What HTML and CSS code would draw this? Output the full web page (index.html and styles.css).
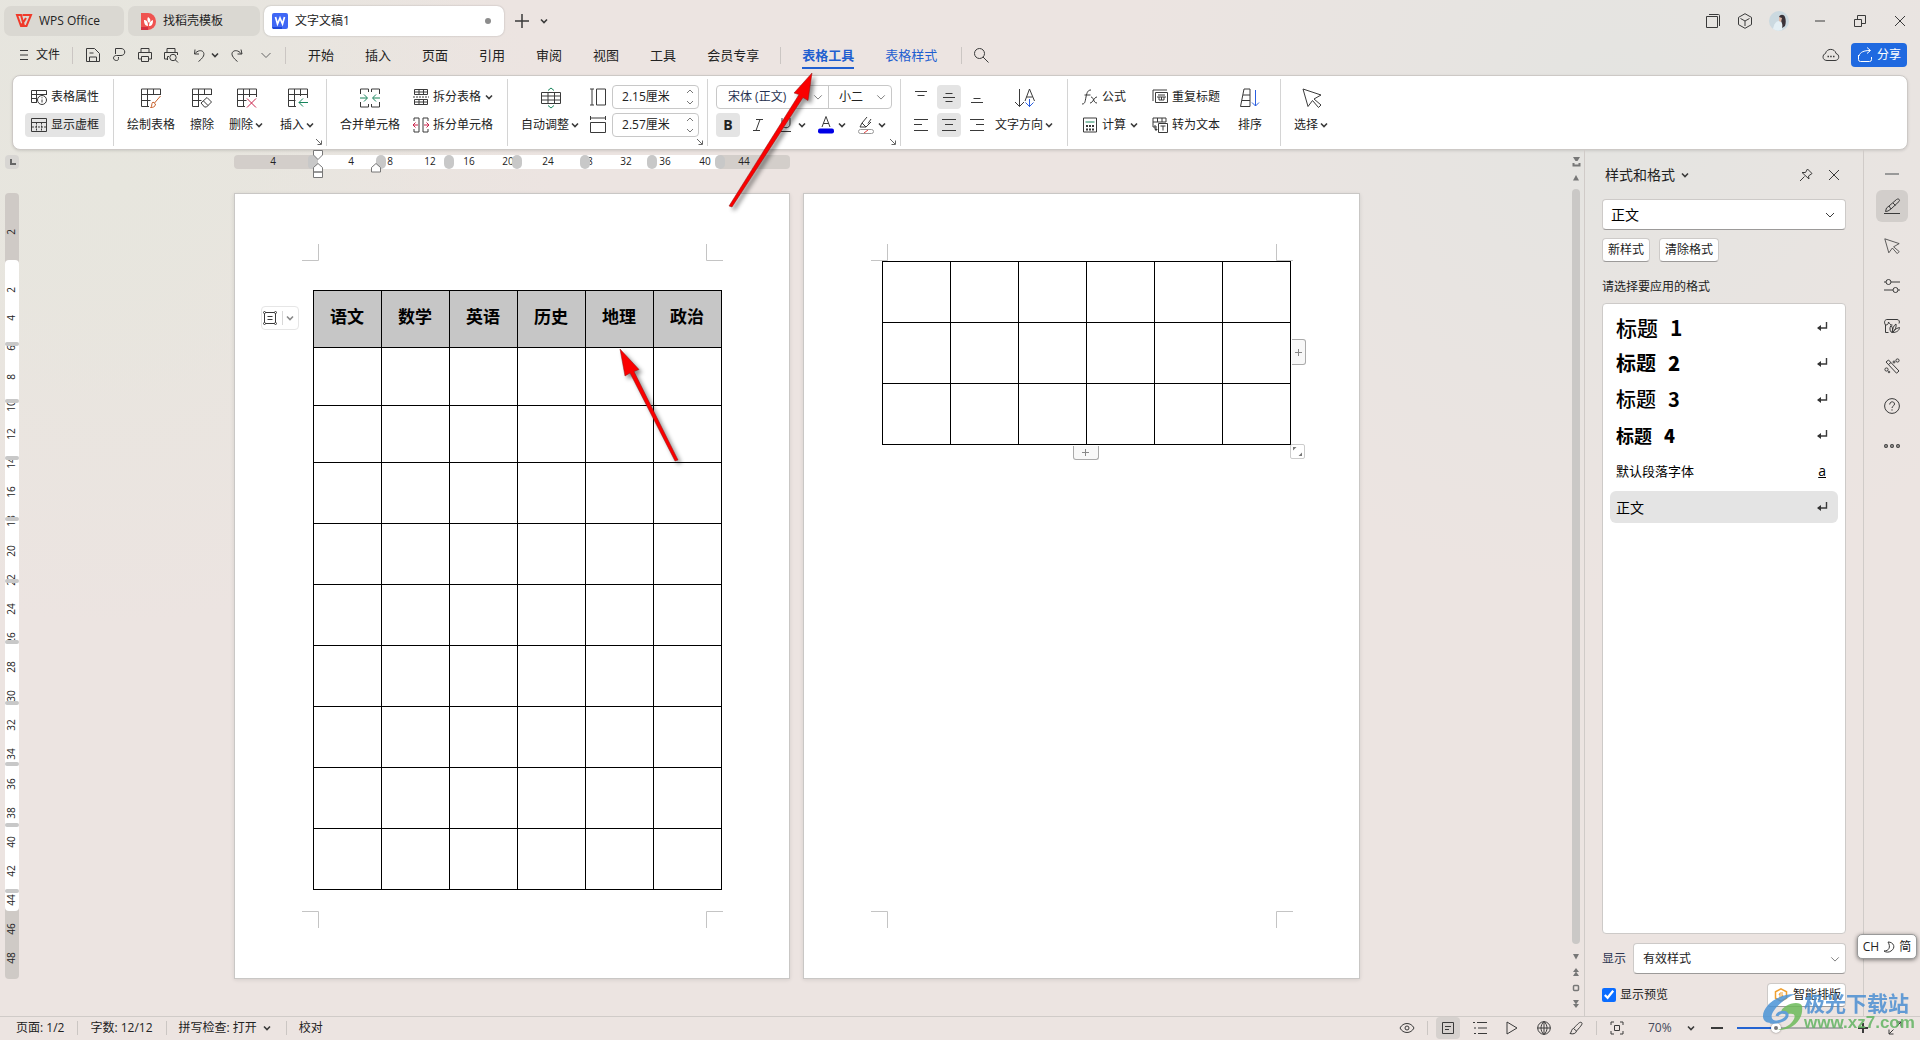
FILE: index.html
```html
<!DOCTYPE html>
<html lang="zh-CN">
<head>
<meta charset="utf-8">
<title>文字文稿1 - WPS Office</title>
<link rel="stylesheet" href="styles.css">
</head>
<body>
<svg class="defs" aria-hidden="true">
  <symbol id="chev" viewBox="0 0 12 12"><path d="M3 4.500l3 3 3-3" stroke-width="1.600"/></symbol>
  <symbol id="chev-l" viewBox="0 0 12 12"><path d="M1.500 4l4.500 4.500L10.500 4" stroke="#666"/></symbol>
  <symbol id="launch" viewBox="0 0 8 8"><path d="M1 1l5 5M6.500 2.500v4h-4" stroke="#666"/></symbol>
  <symbol id="enter" viewBox="0 0 12 12"><path d="M10.500 1v6H2" stroke-width="1.400"/><path d="M5 4v6L1 7z" fill="#333" stroke="none"/></symbol>
  <symbol id="cursor" viewBox="0 0 20 20"><path d="M1 1l18 6-7 4 7 6-2.500 2.500-6-7-4.500 6z"/></symbol>
</svg>

<header class="titlebar">
  <button class="tab tab-home"><svg width="16" height="14" viewBox="0 0 16 14"><path d="M1 1h4l3 11h-3zM5 12L10 4M8 12h2.500L15 1H6.500" fill="none" stroke="#f03a2a" stroke-width="2"/></svg>WPS Office</button>
  <button class="tab tab-docer"><svg class="flat" width="15" height="17" viewBox="0 0 15 17"><path d="M0 0h7a8 8.500 0 010 17H0z" fill="#ef5350"/><path d="M0 14h7v3H0z" fill="#d32f3f"/><path d="M3 7c3 0 4 2 4 6-3 0-4-3-4-6zM7 4c3 2 3 4 1 6-2-2-2-4-1-6zM8 13c0-3 1-5 4-6 0 4-1 6-4 6z" fill="#fff"/></svg>找稻壳模板</button>
  <button class="tab tab-active"><svg class="flat" width="16" height="16" viewBox="0 0 16 16"><rect width="16" height="16" rx="2" fill="#3f67f5"/><path d="M0 14h10v2H1z" fill="#1d46d8"/><path d="M3.500 4l2 7L8 5l2.500 6 2-7" fill="none" stroke="#fff" stroke-width="1.700"/></svg><span>文字文稿1</span><i class="dot"></i></button>
  <button class="ic w32" aria-label="新建"><svg width="16" height="16"><path d="M8 1v14M1 8h14" stroke-width="1.500"/></svg></button>
  <button class="ic" aria-label="标签列表"><svg width="12" height="12"><use href="#chev"/></svg></button>
  <span class="grow"></span>
  <button class="ic w32" aria-label="窗口"><svg width="16" height="16"><path d="M1.500 3.500h11v11h-11zM4 1.500h9.500a1 1 0 011 1V13"/></svg></button>
  <button class="ic w32" aria-label="应用"><svg width="16" height="16"><path d="M8 .700l6.500 3.700v7.200L8 15.300l-6.500-3.700V4.400zM3.500 5.500L8 8l4.500-2.500M8 8v5"/></svg></button>
  <button class="ic w36" aria-label="账号"><svg class="flat" width="20" height="20"><circle cx="10" cy="10" r="10" fill="#cbd9e0"/><path d="M4 18c1-5 3-8 6-8s4 4 3 9q-5 2-9-1z" fill="#e4eff4"/><path d="M10 6c1-3 5-3 6 0 1 3 1 6 0 9l-3 2c1-3 0-5-1-7z" fill="#3a3238"/><path d="M10 6l3 1-1 4-2-1z" fill="#e0b9a8"/></svg></button>
  <span class="gap3"></span>
  <button class="ic w40" aria-label="最小化"><svg width="12" height="12"><path d="M1 6h10"/></svg></button>
  <button class="ic w40" aria-label="还原"><svg width="12" height="12"><path d="M.500 4.500h7v7h-7zM3.500 4V.500h8v8H8"/></svg></button>
  <button class="ic w40" aria-label="关闭"><svg width="12" height="12"><path d="M1 1l10 10M11 1L1 11"/></svg></button>
</header>

<div class="menubar">
  <button class="file"><svg width="10" height="12"><path d="M1 1.500h8M1 6h8M1 10.500h8"/></svg>文件</button>
  <i class="sep"></i>
  <button class="ic w26" aria-label="保存"><svg width="16" height="16"><path d="M1.500 1.500h8l5 5v8h-13zM4.500 14v-4h7v4M4.500 6h4"/></svg></button>
  <button class="ic w26" aria-label="导出PDF"><svg width="14" height="16"><path d="M3.500 7V1.500H9c5 0 5 7 0 7H4.500c-4 0-4 5 0 5 2 0 2-1 2-3.500"/></svg></button>
  <button class="ic w26" aria-label="打印"><svg width="16" height="16"><path d="M4 5V1.500h8V5M4 12H1.500V5.500h13V12H12M4.500 9.500h7v5h-7z"/></svg></button>
  <button class="ic w26" aria-label="打印预览"><svg width="16" height="16"><path d="M4 5V1.500h8V5M4 12H1.500V5.500h13V8M4.500 13V9.500H6"/><circle cx="10" cy="10.500" r="3.200"/><path d="M12.500 13l2.500 2.500"/></svg></button>
  <button class="ic undo" aria-label="撤销"><svg width="20" height="16"><path d="M6 2.500L5.500 7h4.500M5.500 7c5-6 11-3 9 2-1 2-3 4-5 5.500"/></svg><svg width="12" height="12"><use href="#chev"/></svg></button>
  <button class="ic w32" aria-label="恢复"><svg width="16" height="16"><path d="M12 2.500l1 4.500H8.500M12.500 7C8 1 1 4 3.500 9c1 2 3 4 5 5.500"/></svg></button>
  <button class="ic w26" aria-label="更多"><svg width="12" height="12"><use href="#chev-l"/></svg></button>
  <i class="sep sep-nav"></i>
  <nav class="nav">
    <a href="#">开始</a><a href="#">插入</a><a href="#">页面</a><a href="#">引用</a><a href="#">审阅</a><a href="#">视图</a><a href="#">工具</a><a href="#">会员专享</a>
  </nav>
  <i class="sep sep-wide"></i>
  <nav class="nav nav-ctx"><a href="#" class="current">表格工具</a><a href="#">表格样式</a></nav>
  <i class="sep sep-search"></i>
  <button class="ic w32" aria-label="搜索"><svg width="16" height="16"><circle cx="6.500" cy="6.500" r="5"/><path d="M10 10l5.500 5.500"/></svg></button>
  <span class="grow"></span>
  <button class="ic cloud" aria-label="云同步"><svg width="18" height="14"><path d="M5 12.500c-5 0-5-6-1.500-7C4.500 0 13 0 14 5.500c4 1 3.500 7-1 7z"/><path d="M5.500 8.500h1.500M8.200 8.500h1.500M11 8.500h1.500" stroke-width="1.600"/></svg></button>
  <button class="share"><svg width="16" height="16"><path d="M1.500 8v4.500a2 2 0 002 2h9a2 2 0 002-2V10M2 9c1-4 5-5.500 11-5.500M10 .500l3.500 3-3.500 3"/></svg>分享</button>
</div>

<section class="ribbon">
  <div class="group g1">
    <div class="stack">
      <button class="sb"><svg width="16" height="16"><path d="M6 13.500H.500v-12h15V6M.500 5.500h15M5.500 1.500v12M.500 9.500h5"/><circle cx="11" cy="11" r="4.500"/><path d="M11 10.500v3M11 8.300v1"/></svg>表格属性</button>
      <button class="sb on"><svg width="16" height="16"><path d="M.500 1.500h15v13H.500zM.500 5.500h15"/><path d="M5.500 5.500v9M10.500 5.500v9M1 10h14" stroke-dasharray="2 1"/></svg>显示虚框</button>
    </div>
  </div>
  <div class="group g2">
    <div class="bigs">
      <button class="bb"><svg width="20" height="20"><path d="M8 18.500H.500V1h19v6M.500 6.500h19M6.500 1v17.500M.500 12.500h9M12.500 1v5.500"/><path d="M19.500 8l-6 7M12 14l2.500 2c0 3-3 3.500-5 3.500 2-1 .500-4 2.500-5.500z" stroke="#c8602a"/></svg><span>绘制表格</span></button>
      <button class="bb"><svg width="20" height="20"><path d="M7 18.500H.500V1h19v6M.500 6.500h19M6.500 1v17.500M.500 12.500h9M12.500 1v5.500M9 15l6-5.500 4.500 4.500-5 5h-2zM11.500 13l4.500 4.500"/></svg><span>擦除</span></button>
      <button class="bb"><svg width="20" height="20"><path d="M8 18.500H.500V1h19v8M.500 6.500h19M6.500 1v17.500M.500 12.500h9M12.500 1v8"/><path d="M10 10.500l9 9M19 10.500l-9 9" stroke="#c9234a"/></svg><span>删除<svg width="12" height="12"><use href="#chev"/></svg></span></button>
      <button class="bb"><svg width="20" height="20"><path d="M8 18.500H.500V1h19v9M.500 6.500h19M6.500 1v17.500M.500 12.500h7M12.500 1v7"/><path d="M20 14.500h-9M15 10.500l-4 4 4 4" stroke="#16845b"/></svg><span>插入<svg width="12" height="12"><use href="#chev"/></svg></span></button>
    </div>
    <svg class="launch" width="8" height="8"><use href="#launch"/></svg>
  </div>
  <div class="group g3">
    <div class="bigs">
      <button class="bb"><svg width="20" height="20"><path d="M.500 6V1h8v3M.500 14v5h8v-3M19.500 6V1h-8v3M19.500 14v5h-8v-3"/><path d="M0 10h7M4 6.500L7.500 10 4 13.500M20 10h-7M16 6.500L12.500 10l3.500 3.500" stroke="#16845b"/></svg><span>合并单元格</span></button>
    </div>
    <div class="stack">
      <button class="sb"><svg width="16" height="16"><path d="M1.500 5.500v-5h13v5M1.500 3h13M6 .500v5M10.500 .500v5M1.500 10.500v5h13v-5zM1.500 13h13M6 10.500v5M10.500 10.500v5M1.500 5.500h13"/><path d="M0 8h16" stroke-dasharray="2 1"/></svg>拆分表格<svg class="near" width="12" height="12"><use href="#chev"/></svg></button>
      <button class="sb"><svg width="16" height="16"><path d="M1 4V1h5v14H1v-3M15 4V1h-5v14h5v-3"/><path d="M0 8h5M2.500 5.500L0 8l2.500 2.500M16 8h-5M13.500 5.500L16 8l-2.500 2.500" stroke="#c9234a"/></svg>拆分单元格</button>
    </div>
  </div>
  <div class="group g4">
    <div class="bigs">
      <button class="bb"><svg width="20" height="20"><path d="M.500 4.500h19v11H.500zM.500 8h19M.500 12h19M7 4.500v11M13.500 4.500v11"/><path d="M7 2.500l3-2.500 3 2.500M7 17.500l3 2.500 3-2.500" stroke="#16845b"/></svg><span>自动调整<svg width="12" height="12"><use href="#chev"/></svg></span></button>
    </div>
    <div class="stack">
      <label class="num"><svg width="16" height="18"><path d="M0 1h4M2 1v16M0 17h4M6.500 1h9v16h-9z"/></svg><span class="field"><input type="text" value="2.15厘米" aria-label="行高"><svg width="10" height="20"><path d="M2 6l3-3 3 3M2 14l3 3 3-3" stroke="#777"/></svg></span></label>
      <label class="num"><svg width="16" height="18"><path d="M.500 0v4M.500 2h15M15.500 0v4M.500 6.500h15v10H.500z"/></svg><span class="field"><input type="text" value="2.57厘米" aria-label="列宽"><svg width="10" height="20"><path d="M2 6l3-3 3 3M2 14l3 3 3-3" stroke="#777"/></svg></span></label>
    </div>
    <svg class="launch" width="8" height="8"><use href="#launch"/></svg>
  </div>
  <div class="group g5">
    <div class="stack">
      <div class="fonts">
        <span class="sel sel-font"><select aria-label="字体"><option>宋体 (正文)</option></select><svg width="10" height="12"><use href="#chev-l"/></svg></span>
        <span class="sel sel-size"><select aria-label="字号"><option>小二</option></select><svg width="10" height="12"><use href="#chev-l"/></svg></span>
      </div>
      <div class="fmt">
        <button class="sq on bold">B</button>
        <button class="sq it" aria-label="斜体"><svg width="12" height="14"><path d="M4 1.500h7M1 12.500h7M8 1.500L4 12.500"/></svg></button>
        <button class="split" aria-label="下划线"><svg width="20" height="16"><path d="M6 1v6c0 5 8 5 8 0V1M5 14.500h10"/></svg><svg width="12" height="12"><use href="#chev"/></svg></button>
        <button class="split" aria-label="字体颜色"><svg width="20" height="20"><path d="M6 12l4-10.500L14 12M7.200 8.500h5.600"/><rect x="2" y="13.500" width="16" height="5" rx="2" fill="#0000e6" stroke="none"/></svg><svg width="12" height="12"><use href="#chev"/></svg></button>
        <button class="split" aria-label="突出显示"><svg width="20" height="20"><path d="M4 12l2-4 5-6M6 8l4 4 5-5M10 12H4M12 8.500L15 4"/><rect x="2.500" y="14.500" width="15" height="4" rx="2" stroke="#999"/><path d="M8 18l4-3" stroke="#e04040"/></svg><svg width="12" height="12"><use href="#chev"/></svg></button>
      </div>
    </div>
    <svg class="launch" width="8" height="8"><use href="#launch"/></svg>
  </div>
  <div class="group g6">
    <div class="aligns">
      <button class="sq" aria-label="顶端对齐"><svg width="14" height="14"><path d="M1 1.500h12M3.500 5.500h7"/></svg></button>
      <button class="sq on" aria-label="垂直居中"><svg width="14" height="14"><path d="M3.500 3.500h7M1 7.500h12M3.500 11.500h7"/></svg></button>
      <button class="sq" aria-label="底端对齐"><svg width="14" height="14"><path d="M3.500 8.500h7M1 12.500h12"/></svg></button>
      <button class="sq" aria-label="左对齐"><svg width="14" height="14"><path d="M0 1.500h14M0 6.500h8M0 12.500h14"/></svg></button>
      <button class="sq on" aria-label="水平居中"><svg width="14" height="14"><path d="M0 1.500h14M3 6.500h8M0 12.500h14"/></svg></button>
      <button class="sq" aria-label="右对齐"><svg width="14" height="14"><path d="M0 1.500h14M6 6.500h8M0 12.500h14"/></svg></button>
    </div>
    <div class="bigs">
      <button class="bb"><svg width="20" height="20"><path d="M4.500 1v17.500M0 14l4.500 4.500L9 14M10 13l4.500-12L19.500 13M11.500 9h6"/><path d="M14.500 11v8M10.500 14.500l4 4 4-4" stroke="#2b5fe0"/></svg><span>文字方向<svg width="12" height="12"><use href="#chev"/></svg></span></button>
    </div>
  </div>
  <div class="group g7">
    <div class="stack">
      <button class="sb"><svg width="16" height="16"><path d="M0 15c3 0 3-2 4-7S6 1 9 1M2.500 6h6M9 8c3 0 2 6 6 6M15 8c-3 0-4 6-7 6"/></svg>公式</button>
      <button class="sb"><svg width="16" height="16"><path d="M1.500 1h13v14h-13z"/><path d="M3.500 5h9" stroke="#16845b"/><path d="M4 9h8M4 12.500h8" stroke-width="2" stroke-dasharray="2 1"/></svg>计算<svg class="near" width="12" height="12"><use href="#chev"/></svg></button>
    </div>
    <div class="stack">
      <button class="sb"><svg width="16" height="16"><path d="M1 12V1h14M3.500 3.500h12v10h-12zM5 8h9M6 6h7M7 8v3h5V8M9.500 8v3"/></svg>重复标题</button>
      <button class="sb"><svg width="16" height="16"><path d="M1 6V1h13v4H1M5.500 1v4M10 1v4M1 6v4h4M3 8v4.500h2M3.500 11L5 12.500 3.500 14M6.500 6.500h9v9h-9zM8.500 9h5M11 9v4.500"/></svg>转为文本</button>
    </div>
    <div class="bigs">
      <button class="bb"><svg width="20" height="20"><path d="M4 1h6v17.500H.500zM3 7h7M2 12.500h8"/><path d="M15.500 2v16M12 14.500l3.500 3.500 3.500-3.500" stroke="#2b5fe0"/></svg><span>排序</span></button>
    </div>
  </div>
  <div class="group g8">
    <div class="bigs">
      <button class="bb"><svg width="20" height="20"><use href="#cursor"/></svg><span>选择<svg width="12" height="12"><use href="#chev"/></svg></span></button>
    </div>
  </div>
</section>

<main class="work">
  <div class="vruler">
    <svg width="14" height="14"><rect width="14" height="14" rx="4" fill="#d8d6d3" stroke="none"/><path d="M6 4v5h5" stroke="#666" stroke-width="2"/></svg>
    <svg width="14" height="786">
      <rect width="14" height="786" rx="4" fill="#cfcac6" stroke="none"/><rect y="67" width="14" height="651" rx="4" fill="#fff" stroke="none"/>
      <g class="rnum">
        <text transform="translate(10 39) rotate(-90)">2</text><text transform="translate(10 97) rotate(-90)">2</text><text transform="translate(10 125) rotate(-90)">4</text><text transform="translate(10 155) rotate(-90)">6</text><text transform="translate(10 184) rotate(-90)">8</text><text transform="translate(10 213) rotate(-90)">10</text><text transform="translate(10 241) rotate(-90)">12</text><text transform="translate(10 270) rotate(-90)">14</text><text transform="translate(10 299) rotate(-90)">16</text><text transform="translate(10 328) rotate(-90)">18</text><text transform="translate(10 358) rotate(-90)">20</text><text transform="translate(10 387) rotate(-90)">22</text><text transform="translate(10 416) rotate(-90)">24</text><text transform="translate(10 445) rotate(-90)">26</text><text transform="translate(10 474) rotate(-90)">28</text><text transform="translate(10 503) rotate(-90)">30</text><text transform="translate(10 532) rotate(-90)">32</text><text transform="translate(10 561) rotate(-90)">34</text><text transform="translate(10 591) rotate(-90)">36</text><text transform="translate(10 620) rotate(-90)">38</text><text transform="translate(10 649) rotate(-90)">40</text><text transform="translate(10 678) rotate(-90)">42</text><text transform="translate(10 707) rotate(-90)">44</text><text transform="translate(10 736) rotate(-90)">46</text><text transform="translate(10 765) rotate(-90)">48</text>
      </g>
      <g fill="#c8c8c8" stroke="none"><rect y="149" width="14" height="4" rx="2"/><rect y="206" width="14" height="4" rx="2"/><rect y="263" width="14" height="4" rx="2"/><rect y="324" width="14" height="4" rx="2"/><rect y="386" width="14" height="4" rx="2"/><rect y="447" width="14" height="4" rx="2"/><rect y="508" width="14" height="4" rx="2"/><rect y="569" width="14" height="4" rx="2"/><rect y="630" width="14" height="4" rx="2"/><rect y="696" width="14" height="4" rx="2"/></g>
    </svg>
  </div>

  <div class="canvas">
    <svg class="hruler" width="556" height="14">
      <rect width="556" height="14" rx="4" fill="#d3ceca" stroke="none"/><rect x="84" width="402" height="14" fill="#fff" stroke="none"/>
      <g class="rnum"><text x="39" y="10">4</text><text x="117" y="10">4</text><text x="156" y="10">8</text><text x="196" y="10">12</text><text x="235" y="10">16</text><text x="274" y="10">20</text><text x="314" y="10">24</text><text x="353" y="10">28</text><text x="392" y="10">32</text><text x="431" y="10">36</text><text x="471" y="10">40</text><text x="510" y="10">44</text></g>
      <g fill="#c8c8c8" stroke="none"><rect x="74" width="10" height="14" rx="4"/><rect x="142" width="10" height="14" rx="5"/><rect x="210" width="10" height="14" rx="5"/><rect x="278" width="10" height="14" rx="5"/><rect x="346" width="10" height="14" rx="5"/><rect x="413" width="10" height="14" rx="5"/><rect x="481" width="10" height="14" rx="5"/></g>
      <g fill="#fff" stroke="#777"><path d="M79.500-4.500h9V0L84 4.500 79.500 0zM84 8.500l4.500 4v4.500h-9v-4.500zM79.500 17h9v5.500h-9zM142 8.500l4.500 4v4.500h-9v-4.500z"/></g>
    </svg>
    <article class="page page1">
      <svg class="mark tl" width="17" height="17"><path d="M16.500 0v16.500H0"/></svg>
      <svg class="mark tr" width="17" height="17"><path d="M.500 0v16.500H17"/></svg>
      <svg class="mark bl" width="17" height="17"><path d="M0 .500h16.500V17"/></svg>
      <svg class="mark br" width="17" height="17"><path d="M17 .500H.500V17"/></svg>
      <button class="tbltool" aria-label="表格选项"><svg width="14" height="14"><path d="M1.500 1.500h11v11h-11zM4.500 5.500h5M4.500 8.500h5"/><g fill="#fff"><circle cx="1.500" cy="1.500" r="1"/><circle cx="12.500" cy="1.500" r="1"/><circle cx="1.500" cy="12.500" r="1"/><circle cx="12.500" cy="12.500" r="1"/></g></svg><i></i><svg class="soft" width="12" height="12"><use href="#chev"/></svg></button>
      <table class="doc">
        <thead><tr class="r57"><th>语文</th><th>数学</th><th>英语</th><th>历史</th><th>地理</th><th>政治</th></tr></thead>
        <tbody>
        <tr class="r58"><td></td><td></td><td></td><td></td><td></td><td></td></tr>
        <tr class="r57"><td></td><td></td><td></td><td></td><td></td><td></td></tr>
        <tr><td></td><td></td><td></td><td></td><td></td><td></td></tr>
        <tr><td></td><td></td><td></td><td></td><td></td><td></td></tr>
        <tr><td></td><td></td><td></td><td></td><td></td><td></td></tr>
        <tr><td></td><td></td><td></td><td></td><td></td><td></td></tr>
        <tr><td></td><td></td><td></td><td></td><td></td><td></td></tr>
        <tr><td></td><td></td><td></td><td></td><td></td><td></td></tr>
        <tr><td></td><td></td><td></td><td></td><td></td><td></td></tr>
        </tbody>
      </table>
      <svg class="arrow arrow-cell" width="70" height="125"><path d="M5 3l5 27 5-3 45 88 3-1L19 25.500l5-2z"/></svg>
      <svg class="arrow arrow-tab" width="100" height="145"><path d="M89 3L71 23l5 1.500L6 136l3 1L80 27.500l5 3z"/></svg>
    </article>
    <article class="page page2">
      <svg class="mark tl" width="17" height="17"><path d="M16.500 0v16.500H0"/></svg>
      <svg class="mark tr" width="17" height="17"><path d="M.500 0v16.500H17"/></svg>
      <svg class="mark bl" width="17" height="17"><path d="M0 .500h16.500V17"/></svg>
      <svg class="mark br" width="17" height="17"><path d="M17 .500H.500V17"/></svg>
      <table class="doc">
        <tbody>
        <tr><td></td><td></td><td></td><td></td><td></td><td></td></tr>
        <tr><td></td><td></td><td></td><td></td><td></td><td></td></tr>
        <tr><td></td><td></td><td></td><td></td><td></td><td></td></tr>
        </tbody>
      </table>
      <button class="handle addcol" aria-label="添加列"><svg width="7" height="7"><path d="M3.500 0v7M0 3.500h7"/></svg></button>
      <button class="handle addrow" aria-label="添加行"><svg width="7" height="7"><path d="M3.500 0v7M0 3.500h7"/></svg></button>
      <button class="handle grip" aria-label="调整大小"><svg class="tips" width="11" height="11"><path d="M1 1h3.500L1 4.500zM10 10H6.500L10 6.500z"/></svg></button>
    </article>
  </div>

  <div class="vscroll">
    <svg width="9" height="10"><path d="M1 0h7L5.500 4h-2zM.500 9.500V6h2v1.500h4V6h2v3.500z" fill="#777" stroke="none"/></svg>
    <svg width="8" height="6"><path d="M4 0l3 5.500H1z" fill="#777" stroke="none"/></svg>
    <i class="thumb"></i>
    <svg width="8" height="6"><path d="M4 5.500L7 0H1z" fill="#777" stroke="none"/></svg>
    <svg width="8" height="8"><path d="M4 0l3 4H1zM4 3.500L7 8H1z" fill="#777" stroke="none"/></svg>
    <svg width="8" height="8"><rect x="1.500" y="1.500" width="5" height="5" rx="1" stroke="#777" stroke-width="1.500"/></svg>
    <svg width="8" height="8"><path d="M4 4.500L7 0H1zM4 8l3-4H1z" fill="#777" stroke="none"/></svg>
  </div>

  <aside class="panel">
    <div class="phead"><span>样式和格式</span><svg width="12" height="12"><use href="#chev"/></svg><i class="grow"></i>
      <button class="ic pbtn" aria-label="固定"><svg width="14" height="14"><path d="M8.500 1L13 5.500 9.500 8l.500 3L3 4.500h3.500zM5.500 8.500L1 13"/></svg></button>
      <button class="ic pbtn" aria-label="关闭窗格"><svg width="12" height="12"><path d="M1 1l10 10M11 1L1 11"/></svg></button></div>
    <span class="sel psel"><select aria-label="当前样式"><option>正文</option></select><svg class="dark" width="12" height="12" viewBox="0 0 12 12"><path d="M2 4l4 4 4-4"/></svg></span>
    <div class="pbtns"><button class="pb">新样式</button><button class="pb">清除格式</button></div>
    <p class="plabel">请选择要应用的格式</p>
    <ul class="styles">
      <li class="h1"><span>标题<b>1</b></span><svg width="12" height="12"><use href="#enter"/></svg></li>
      <li class="h2"><span>标题<b>2</b></span><svg width="12" height="12"><use href="#enter"/></svg></li>
      <li class="h3"><span>标题<b>3</b></span><svg width="12" height="12"><use href="#enter"/></svg></li>
      <li class="h4"><span>标题<b>4</b></span><svg width="12" height="12"><use href="#enter"/></svg></li>
      <li class="def"><span>默认段落字体</span><u>a</u></li>
      <li class="body on"><span>正文</span><svg width="12" height="12"><use href="#enter"/></svg></li>
    </ul>
    <div class="show"><label for="show">显示</label><span class="sel ssel"><select id="show"><option>有效样式</option></select><svg width="10" height="12"><use href="#chev-l"/></svg></span></div>
    <div class="preview"><label><input type="checkbox" checked>显示预览</label>
      <button class="pb smart"><svg width="14" height="14"><path d="M7 .800l5.500 3v6.400L7 13.200l-5.500-3V3.800z" stroke="#f0a030" stroke-width="1.500"/><path d="M9 5H6l-1 2h4L8 9H5" stroke="#f0a030"/></svg>智能排版</button></div>
  </aside>

  <aside class="strip">
    <button class="fold" aria-label="折叠"><svg width="14" height="2"><path d="M0 1h14" stroke="#999" stroke-width="2"/></svg></button>
    <button class="on" aria-label="样式"><svg width="16" height="16"><path d="M12.500 1.500c2-1.500 4 .500 2.500 2L7 11l-3 2-2.500.500L2.500 10 5 8zM5 8l2 3M9 5l2.500 2.500M0 15.500h16"/></svg></button>
    <button aria-label="选择窗格"><svg width="16" height="16"><use href="#cursor"/></svg></button>
    <button aria-label="设置"><svg width="16" height="16"><circle cx="4.500" cy="4" r="2.500"/><path d="M0 4h2M7 4h9M0 12h9M14 12h2"/><circle cx="11.500" cy="12" r="2.500"/></svg></button>
    <button aria-label="图库"><svg width="16" height="16"><path d="M4.500 14.500H1.500V7C-.500 4 1 1.500 3 1.500h10c2 0 3 2 2 4M1.500 7c2 0 3-1 3-3 1 2 2 3 4 3M7.500 14.500c-2-2-2-5-.500-7 2 2 2 5 .500 7zM8.500 14.500c0-4 1-7 3.500-8.500.500 3-.500 6-3.500 8.500 1-2 3-4 7-5 0 3-3 5-7 5z"/></svg></button>
    <button aria-label="工具"><svg width="16" height="16"><path d="M2 4l2.500-2L15 13l-2.500 2.200zM4.500 6.500l2.500-2"/><circle cx="2.500" cy="11.500" r="1.600"/><circle cx="13.500" cy="2.500" r="1.600"/><circle cx="10" cy="4" r="1"/><circle cx="5" cy="14" r=".800"/></svg></button>
    <button aria-label="帮助"><svg width="16" height="16"><circle cx="8" cy="8" r="7.400"/><path d="M5.700 6.500C5.700 3 10.500 3 10.500 6c0 2-2.500 2-2.500 4M8 11.300v1.300"/></svg></button>
    <button aria-label="更多"><svg width="16" height="6"><g stroke-width="1.200"><circle cx="2" cy="3" r="1.400"/><circle cx="8" cy="3" r="1.400"/><circle cx="14" cy="3" r="1.400"/></g></svg></button>
  </aside>
</main>

<footer class="status">
  <span>页面: 1/2</span><i class="sep"></i><span>字数: 12/12</span><i class="sep"></i><span class="spell">拼写检查: 打开<svg width="12" height="12"><use href="#chev"/></svg></span><i class="sep"></i><span>校对</span>
  <div class="views">
    <button aria-label="护眼"><svg width="16" height="12"><path d="M1 6c3-6 11-6 14 0-3 6-11 6-14 0z"/><circle cx="8" cy="6" r="2"/></svg></button>
    <i class="sep"></i>
    <button class="on" aria-label="页面视图"><svg width="14" height="14"><path d="M1.500 1.500h11v11h-11zM4 5.500h6M4 8.500h4"/></svg></button>
    <button aria-label="大纲"><svg width="14" height="14"><path d="M4 1.500h10M5 7h9M5 12.500h9M0 1.500h2M1 7h2M1 12.500h2"/></svg></button>
    <button aria-label="阅读"><svg width="12" height="14"><path d="M1 1l10 6-10 6z"/></svg></button>
    <button aria-label="网页"><svg width="14" height="14"><circle cx="7" cy="7" r="6.300"/><path d="M.500 7h13M7 .500v13M7 .500C3 4 3 10 7 13.500M7 .500c4 3.500 4 9.500 0 13"/></svg></button>
    <button aria-label="写作"><svg width="14" height="14"><path d="M12.500 1.500c1.500 1 0 3-5 8.500L4.500 7.500C9 2.500 11 .500 12.500 1.500zM4.500 7.500C2 8 3 11 1 12.500c3 1 6 0 6.500-2.500"/></svg></button>
    <i class="sep"></i>
    <button aria-label="适应"><svg width="14" height="14"><path d="M1 4V1h3M10 1h3v3M13 10v3h-3M4 13H1v-3M4.500 4.500h5v5h-5z"/></svg></button>
    <span class="sel zsel"><select aria-label="缩放"><option>70%</option></select><svg width="12" height="12"><use href="#chev"/></svg></span>
    <button aria-label="缩小"><svg width="12" height="12"><path d="M0 6h12" stroke-width="2"/></svg></button>
    <input class="zoom" type="range" min="0" max="100" value="35" aria-label="缩放比例">
    <button aria-label="放大"><svg width="12" height="12"><path d="M1 6h10M6 1v10" stroke-width="2"/></svg></button>
    <button aria-label="全屏"><svg width="14" height="14"><path d="M8.500 1H13v4.500M13 1L8.500 5.500M5.500 13H1V8.500M1 13l4.500-4.500"/></svg></button>
  </div>
</footer>

<div class="ime">CH<svg width="12" height="12"><path d="M5 1c6 0 8 6 3 9-2 1.500-5 1.500-7 0 5 0 7-4 4-9z"/></svg>简</div>
<div class="wm">
  <svg width="42" height="38" viewBox="0 0 42 38"><path d="M33 1C14 1 0 14 1 24c1 7 9 7 15 4-6 0-8-4-5-9C15 12 24 5 33 1z" fill="#4b93d6" stroke="none"/><path d="M40 13c-1-4-10-4-16 0-7 4-6 9 2 8 5-1 8 0 6 5-3 6-9 9-17 11 14 1 27-9 25-24z" fill="#6cba5a" stroke="none"/><path d="M8 29c10 1 18-3 17-8-2-3-9-2-10 2" stroke="#4b93d6" stroke-width="3"/></svg>
  <div><b>极光下载站</b><em>www.xz7.com</em></div>
</div>
</body>
</html>
```
FILE: styles.css
```css
* { box-sizing: border-box; }
body {
  margin: 0;
  min-height: 100vh;
  display: flex;
  flex-direction: column;
  position: relative;
  font: 12px/16px "Open Sans", "Noto Sans CJK SC", sans-serif;
  color: #222;
  background:
    radial-gradient(circle at 6% 18%, #e7e6de 0, rgba(231, 230, 222, 0) 22%),
    radial-gradient(circle at 84% 10%, #e4e4e1 0, rgba(228, 228, 225, 0) 26%),
    radial-gradient(circle at 2% 0, #e5e4df 0, rgba(229, 228, 223, 0) 20%),
    #ece4e1;
}
button, input, select { font: inherit; color: inherit; margin: 0; padding: 0; border: 0; background: none; }
button { display: flex; align-items: center; justify-content: center; white-space: nowrap; }
a { color: inherit; text-decoration: none; }
svg { fill: none; stroke: #3a3a3a; flex: none; overflow: visible; display: block; }
.flat { stroke: none; }
.soft { opacity: .6; }
.defs { position: absolute; width: 0; height: 0; }
.grow { flex: 1; }
.sep { flex: none; width: 1px; height: 17px; background: #cbc6c3; }
.w26 { width: 26px; }
.w32 { width: 32px; }
.w36 { width: 36px; }
.w40 { width: 40px; }
.gap3 { width: 3px; }

/* Title bar */
.titlebar { display: flex; align-items: center; height: 36px; padding: 6px 0 0 4px; }
.tab { height: 30px; border-radius: 7px; background: #dad8d2; margin-right: 4px; gap: 7px; justify-content: flex-start; }
.tab-home { width: 120px; padding-left: 12px; }
.tab-docer { width: 132px; padding-left: 13px; }
.tab-active { width: 240px; padding: 0 13px 0 8px; background: #fff; box-shadow: 0 0 2px rgba(0, 0, 0, .25); margin-right: 2px; }
.dot { width: 6px; height: 6px; border-radius: 3px; background: #8c8c8c; margin-left: auto; }

/* Menu bar */
.menubar { display: flex; align-items: center; height: 39px; padding: 0 13px 1px 19px; }
.file { gap: 7px; margin-right: 12px; }
.file + .sep { margin-right: 7px; }
.undo { margin-left: 5px; }
.sep-nav { margin: 0 22px 0 6px; }
.nav { display: flex; gap: 31px; font-size: 13px; line-height: 20px; }
.nav a { padding: 3px 0 2px; border-bottom: 2px solid transparent; }
.nav-ctx { color: #1f5fd0; }
.nav .current { font-weight: 600; border-color: #1f5fd0; }
.sep-wide { margin: 0 21px; }
.sep-search { margin: 0 3px 0 24px; }
.cloud { margin-right: 11px; }
.share { width: 56px; height: 24px; border-radius: 4px; background: #1f69e0; color: #fff; gap: 4px; }
.share svg { stroke: #fff; }

/* Ribbon */
.ribbon { display: flex; margin: 0 12px; padding: 3px 0; height: 75px; background: #fff; border: 1px solid #cdc9c6; border-radius: 8px; box-shadow: 0 1px 3px rgba(0, 0, 0, .12); }
.group { flex: none; position: relative; display: flex; padding: 6px 0 0 8px; border-right: 1px solid #d4d4d4; }
.g1 { width: 101px; padding-left: 12px; }
.g2 { width: 213px; padding-left: 8px; }
.g3 { width: 181px; gap: 2px; }
.g4 { width: 200px; padding-left: 8px; gap: 4px; }
.g5 { width: 193px; }
.g6 { width: 167px; gap: 1px; }
.g7 { width: 213px; }
.g7 .bigs { margin-left: 7px; }
.g8 { border: 0; padding-left: 8px; }
.stack { display: flex; flex-direction: column; gap: 4px; }
.sb { height: 24px; padding: 0 6px; gap: 4px; border-radius: 4px; justify-content: flex-start; }
.near { margin-left: -2px; }
.on { background: #e4e4e4; }
.bigs { display: flex; gap: 5px; align-items: flex-start; }
.bb { flex-direction: column; height: 52px; padding: 3px 5px 4px; justify-content: space-between; }
.bb span { display: flex; align-items: center; }
.launch { position: absolute; right: 3px; bottom: 0; }
.num { display: flex; align-items: center; gap: 6px; height: 24px; }
.field { display: flex; align-items: center; width: 87px; height: 24px; border: 1px solid #c8c8c8; border-radius: 4px; padding: 0 3px 0 9px; }
.field input { flex: 1; min-width: 0; }
.sel { display: grid; align-items: center; }
.sel select { grid-area: 1 / 1; appearance: none; width: 100%; height: 100%; }
.sel svg { grid-area: 1 / 1; justify-self: end; margin-right: 5px; pointer-events: none; }
.fonts { display: flex; height: 24px; width: 176px; border: 1px solid #c8c8c8; border-radius: 4px; }
.sel-font { flex: 1; border-right: 1px solid #c8c8c8; }
.sel-font select { padding-left: 11px; color: #26314f; }
.sel-size { width: 62px; }
.sel-size select { padding-left: 10px; }
.fmt { display: flex; gap: 8px; height: 24px; }
.sq { width: 24px; height: 24px; border-radius: 4px; }
.it { width: 20px; }
.bold { font-weight: 700; font-size: 14px; }
.split { width: 32px; }
.aligns { display: grid; grid-template-columns: repeat(3, 24px); gap: 4px; align-content: start; }

/* Work area */
.work { flex: 1; display: flex; }
.vruler { flex: none; width: 26px; padding: 5px 0 0 5px; display: flex; flex-direction: column; gap: 24px; }
.rnum text { font: 10px "Open Sans", sans-serif; fill: #222; stroke: none; text-anchor: middle; }
.canvas { flex: 1; display: grid; grid-template-columns: 556px 557px; grid-template-rows: 14px auto; column-gap: 13px; row-gap: 24px; justify-content: center; align-content: start; padding: 5px 0 36px; }
.page { position: relative; min-height: 786px; background: #fff; border: 1px solid #c9c7c5; box-shadow: 0 1px 4px rgba(0, 0, 0, .1); }
.hruler { grid-column: 1 / -1; }
.page1 { padding: 96px 0 0 78px; }
.page2 { padding: 67px 0 0 78px; }
.mark { position: absolute; stroke: #c4c4c4; }
.tl { left: 67px; top: 50px; }
.tr { right: 66px; top: 50px; }
.bl { left: 67px; bottom: 50px; }
.br { right: 66px; bottom: 50px; }
.doc { position: relative; border-collapse: collapse; table-layout: fixed; width: 409px; }
.doc td, .doc th { border: 1px solid #000; padding: 0; width: 68px; }
.doc tr { height: 61px; }
.doc .r57 { height: 57px; }
.doc .r58 { height: 58px; }
.doc th { background: #c6c6c6; font-family: "Noto Sans CJK SC", sans-serif; font-size: 17px; line-height: 24px; font-weight: 700; color: #000; padding-bottom: 6px; }
.tbltool { position: absolute; left: 26px; top: 112px; width: 38px; height: 24px; border: 1px solid #e6e6e6; border-radius: 4px; gap: 1px; }
.tbltool i { width: 1px; height: 14px; background: #d8d8d8; margin-left: 4px; }
.handle { position: absolute; background: #f8f8f8; border: 1px solid #aaa; }
.handle svg { stroke: #888; }
.handle .tips { fill: #777; stroke: none; }
.addcol { left: 488px; top: 145px; width: 14px; height: 26px; border-left: 0; border-radius: 0 3px 3px 0; }
.addrow { left: 269px; top: 252px; width: 26px; height: 14px; border-top: 0; border-radius: 0 0 3px 3px; }
.grip { left: 486px; top: 250px; width: 15px; height: 15px; border-color: #ccc; background: #fff; border-radius: 2px; }
.arrow { position: absolute; z-index: 5; fill: #fa0000; stroke: #8c1414; stroke-width: .5; filter: drop-shadow(3px 3px 2px rgba(0, 0, 0, .45)); pointer-events: none; }
.arrow-cell { left: 380px; top: 152px; }
.arrow-tab { left: 488px; top: -124px; }
.vscroll { flex: none; width: 17px; display: flex; flex-direction: column; align-items: center; gap: 8px; padding: 7px 0 8px; }
.vscroll svg { margin: 0 0 0 1px; }
.thumb { flex: 1; width: 8px; border-radius: 4px; background: #cac8c6; margin: 0 0 2px 1px; }

/* Styles panel */
.panel { flex: none; width: 280px; border: solid #d0cbc8; border-width: 0 1px; padding: 0 17px 9px; display: flex; flex-direction: column; }
.phead { display: flex; align-items: center; height: 49px; padding-left: 3px; font-size: 14px; gap: 4px; }
.pbtn { width: 24px; height: 24px; }
.psel, .ssel, .pb, .styles { background: #fff; border: 1px solid #cdcac8; border-radius: 4px; }
.psel, .ssel, .pb { border-bottom-color: #9c9a99; }
.psel { height: 31px; font-size: 14px; color: #000; }
.psel select { padding-left: 8px; }
.sel .dark { margin-right: 9px; }
.pbtns { display: flex; gap: 9px; margin-top: 8px; }
.pb { height: 24px; padding: 0 5px; }
.plabel { margin: 15px 0 6px; line-height: 20px; }
.styles { flex: 1; display: flex; flex-direction: column; gap: 4px; margin: 0; padding: 7px 7px; list-style: none; color: #000; font-family: "Noto Sans CJK SC", sans-serif; }
.styles li { display: flex; align-items: center; justify-content: space-between; height: 32px; padding: 0 10px 0 6px; border-radius: 6px; line-height: 28px; }
.styles b { margin-left: 12px; font-family: "Noto Sans CJK SC", sans-serif; }
.styles .h1 { font-size: 21px; font-weight: 500; }
.styles .h2 { font-size: 20px; font-weight: 700; }
.styles .h3 { font-size: 20px; font-weight: 500; }
.styles .h4 { font-size: 18px; font-weight: 700; }
.styles .def { font-size: 13px; }
.styles .body { font-size: 14px; }
.def u { font: 14px/16px "Open Sans", sans-serif; margin-right: 2px; text-decoration: underline; }
.show { display: flex; align-items: center; justify-content: space-between; margin-top: 9px; color: #2c3550; }
.ssel { width: 213px; height: 31px; color: #222; }
.ssel select { padding-left: 9px; }
.preview { display: flex; align-items: center; justify-content: space-between; margin-top: 9px; }
.preview label { display: flex; align-items: center; gap: 4px; }
.preview input { width: 14px; height: 14px; accent-color: #0a6cff; }
.smart { gap: 5px; padding: 0 4px 0 6px; }

.strip { flex: none; width: 56px; display: flex; flex-direction: column; align-items: center; gap: 8px; padding-top: 16px; }
.strip button { width: 32px; height: 32px; border-radius: 6px; }
.strip .fold { height: 16px; }
.strip .on { background: #d2cecb; }

/* Status bar */
.status { display: flex; align-items: center; gap: 12px; height: 24px; padding: 0 13px 1px 16px; border-top: 1px solid #d0cbc8; }
.status .sep { height: 14px; }
.status > span { padding-right: 1px; }
.spell { display: flex; align-items: center; gap: 4px; }
.views { display: flex; align-items: center; gap: 8px; margin-left: auto; }
.views button { width: 24px; height: 22px; border-radius: 4px; }
.views .on { background: #d6d1ce; }
.zsel { width: 60px; }
.zsel select { padding-left: 11px; color: #44485a; }
.zsel svg { margin-right: 0; }
.zoom { appearance: none; width: 106px; height: 12px; background: linear-gradient(90deg, #2463d1 36%, #aaa 36%) center / 100% 2px no-repeat; }
.zoom::-webkit-slider-thumb { appearance: none; width: 10px; height: 10px; border-radius: 5px; background: #777; border: 3px solid #fff; box-shadow: 0 0 2px rgba(0, 0, 0, .5); }

/* Floating input indicator and watermark */
.ime { position: absolute; right: 3px; bottom: 81px; width: 60px; height: 25px; display: flex; align-items: center; justify-content: center; gap: 4px; background: #fff; border: 1px solid #999; border-radius: 5px; box-shadow: 0 1px 4px rgba(0, 0, 0, .5); }
.wm { position: absolute; right: 9px; bottom: 8px; display: flex; align-items: center; opacity: .85; pointer-events: none; }
.wm div { display: flex; flex-direction: column; width: 107px; }
.wm b { font-size: 21px; line-height: 22px; color: #4c8fd2; }
.wm em { font: 700 17px/18px "Liberation Sans", sans-serif; color: #63b463; }
```
